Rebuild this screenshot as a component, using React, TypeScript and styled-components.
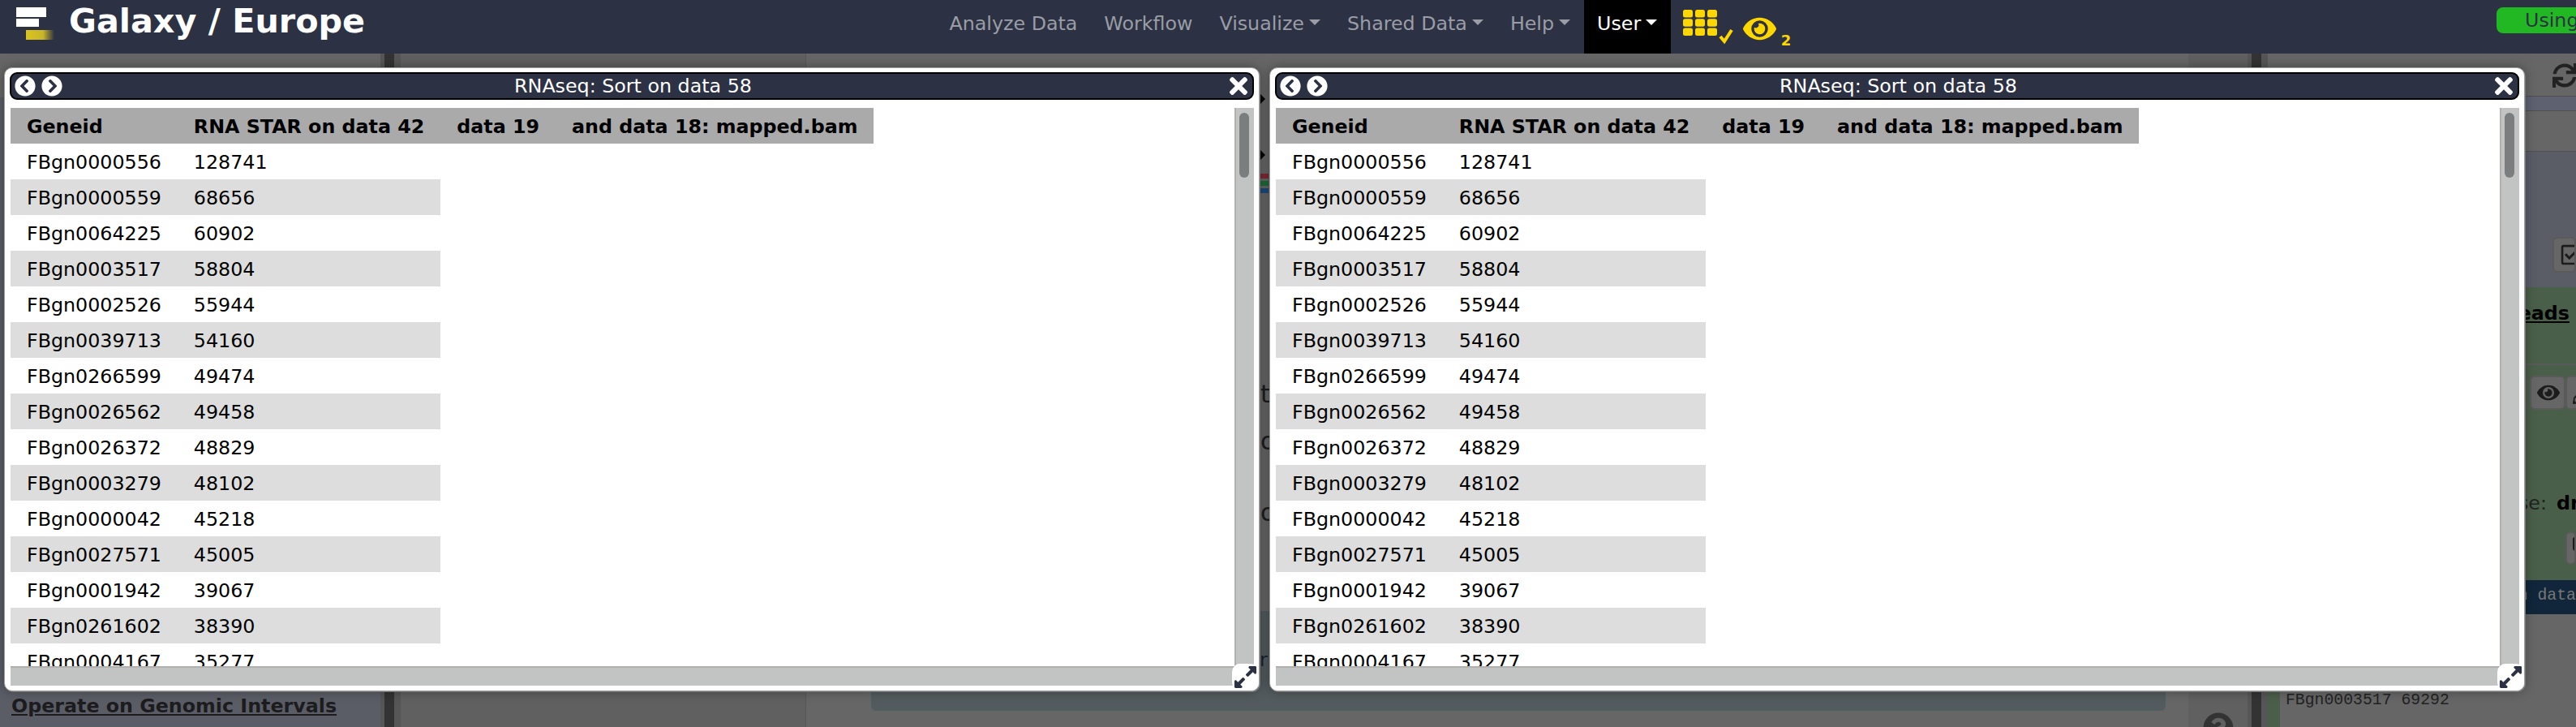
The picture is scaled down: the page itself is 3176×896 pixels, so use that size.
import React from "react";
import styled, { createGlobalStyle } from "styled-components";
import {
  FaChevronCircleLeft,
  FaChevronCircleRight,
  FaTimes,
  FaExpandAlt,
  FaEye,
  FaSync,
  FaRegCheckSquare,
  FaTag,
  FaPencilAlt,
  FaQuestionCircle,
} from "react-icons/fa";

const GlobalStyle = createGlobalStyle`
  html, body {
    margin: 0;
    padding: 0;
    background: #666;
    overflow: hidden;
  }
  * {
    box-sizing: border-box;
  }
`;

const SANS = `"DejaVu Sans", Verdana, sans-serif`;
const MONO = `"Liberation Mono", "Courier New", monospace`;

const Page = styled.div`
  position: relative;
  width: 3176px;
  height: 896px;
  overflow: hidden;
  display: flex;
  flex-direction: column;
  font-family: ${SANS};
  font-size: 23.75px;
  background: #666;
`;

/* masthead */

const Masthead = styled.header`
  flex: 0 0 66px;
  display: flex;
  align-items: stretch;
  background: #2c3143;
`;

const Brand = styled.div`
  flex: 0 0 1154px;
  display: flex;
  align-items: flex-start;
  padding-left: 20px;
`;

const BrandTitle = styled.span`
  margin: 0 0 0 15px;
  color: #fff;
  font-size: 41.3px;
  font-weight: 700;
  line-height: 52px;
`;

const NavItem = styled.div<{ $active?: boolean }>`
  display: flex;
  align-items: center;
  padding: 0 16.5px 8px;
  color: ${(p) => (p.$active ? "#fff" : "#9a9da6")};
  background: ${(p) => (p.$active ? "#000" : "transparent")};
  white-space: nowrap;
`;

const Caret = styled.span`
  display: inline-block;
  margin: 0 0 4px 6px;
  border-left: 7px solid transparent;
  border-right: 7px solid transparent;
  border-top: 7px solid currentColor;
`;

const NavIcons = styled.div`
  display: flex;
  align-items: flex-start;
  color: #ffd700;
  padding: 12px 0 0 15px;
`;

const EyeWrap = styled.div`
  position: relative;
  margin: 3px 0 0 9px;
  height: 30px;
`;

const EyeBadge = styled.span`
  position: absolute;
  left: 47px;
  top: 25px;
  font-size: 18px;
  font-weight: 700;
  line-height: 20px;
`;

const UsagePill = styled.div`
  margin: 9px 0 25px auto;
  width: 98px;
  padding-left: 35px;
  border-radius: 8px 0 0 8px;
  background: #22b823;
  color: #2c3143;
  line-height: 32px;
  overflow: hidden;
`;

/* dimmed page behind the windows */

const Workspace = styled.main`
  flex: 1;
  display: flex;
  min-height: 0;
`;

const ToolPanel = styled.aside`
  flex: 0 0 469px;
  display: flex;
  flex-direction: column;
  justify-content: flex-end;
  background: linear-gradient(#666 0 54px, #5a5d66 54px);
  padding: 0 0 12px 14px;
`;

const ToolLink = styled.a`
  color: #1c1c1e;
  font-weight: 700;
  text-decoration: underline;
  line-height: 28px;
`;

const Splitter = styled.div`
  flex: 0 0 25px;
  background: linear-gradient(
    to right,
    #565656 0 5px,
    #333 5px 17px,
    #565656 17px
  );
`;

const Center = styled.section`
  flex: 0 0 2277px;
  position: relative;
  display: flex;
  background: #606060;
`;

const CenterLeft = styled.div`
  flex: 0 0 500px;
  border-right: 1px solid #565656;
`;

const CenterMiddle = styled.div`
  flex: 0 0 1704px;
  display: flex;
  flex-direction: column;
  justify-content: flex-end;
  background: #666;
  padding: 0 28px 20px 80px;
`;

const Notice = styled.div`
  height: 123px;
  padding: 46px 0 0 478px;
  border: 1px solid #4a6065;
  border-top: 0;
  border-radius: 0 0 6px 6px;
  background: #535b5e;
  color: #14262e;
  line-height: 28px;
`;

const CenterRight = styled.div`
  flex: 1;
  padding: 812px 0 0 18px;
  font-size: 38px;
  color: #333;
  overflow: hidden;
  svg {
    display: block;
  }
`;

const GapMarks = styled.div`
  position: absolute;
  left: 1060px;
  top: 50px;
  width: 10px;
  display: flex;
  flex-direction: column;
`;

const MarkArrow = styled.span<{ $gap: number }>`
  margin-top: ${(p) => p.$gap}px;
  width: 0;
  height: 0;
  border-top: 6px solid transparent;
  border-bottom: 6px solid transparent;
  border-left: 6px solid #000;
`;

const MarkBar = styled.span<{ $color: string; $gap: number }>`
  margin-top: ${(p) => p.$gap}px;
  height: 6px;
  background: ${(p) => p.$color};
`;

const MarkGlyph = styled.span<{ $gap: number }>`
  margin-top: ${(p) => p.$gap}px;
  color: #1c1c1c;
  font-size: 30px;
  line-height: 28px;
`;

const HistoryPanel = styled.aside`
  flex: 1;
  display: flex;
  flex-direction: column;
  min-width: 0;
  background: #666;
`;

const HistoryTools = styled.div`
  flex: 0 0 53px;
  display: flex;
  justify-content: flex-end;
  padding-top: 12px;
  color: #222;
  font-size: 30px;
  border-bottom: 1px solid #4f4f4f;
  overflow: hidden;
`;

const RefreshSlot = styled.div`
  width: 29px;
  overflow: hidden;
  svg {
    display: block;
  }
`;

const HistoryBand = styled.div<{ $h: number; $bg: string }>`
  flex: 0 0 ${(p) => p.$h}px;
  background: ${(p) => p.$bg};
  border-bottom: 1px solid #4f4f4f;
`;

const HistoryActions = styled.div`
  flex: 0 0 167px;
  display: flex;
  justify-content: flex-end;
  padding-top: 105px;
  background: #5a5d66;
`;

const IconButton = styled.div<{ $w: number; $h: number }>`
  flex: 0 0 ${(p) => p.$w}px;
  height: ${(p) => p.$h}px;
  display: flex;
  align-items: center;
  padding-left: 7px;
  border: 2px solid #5a5a5a;
  border-radius: 6px;
  background: #666;
  color: #1c1c1c;
  font-size: 28px;
  overflow: hidden;
  svg {
    flex: none;
  }
`;

const Dataset = styled.div`
  flex: 0 0 361px;
  display: flex;
  flex-direction: column;
  background: #4a5f49;
`;

const DatasetTitle = styled.div`
  flex: 0 0 96px;
  display: flex;
  justify-content: flex-end;
  padding: 18px 8px 0 0;
  border-bottom: 2px solid #5a5a5a;
`;

const DatasetLink = styled.a`
  color: #000;
  font-weight: 700;
  text-decoration: underline;
  line-height: 28px;
  white-space: nowrap;
`;

const DatasetButtons = styled.div`
  display: flex;
  padding: 13px 0 0 323px;
`;

const DatasetMeta = styled.div`
  margin-top: 103px;
  display: flex;
  justify-content: flex-end;
  gap: 12px;
  color: #222;
  line-height: 24px;
  white-space: nowrap;
  strong {
    width: 24px;
    color: #000;
    overflow: hidden;
  }
`;

const DatasetTagRow = styled.div`
  display: flex;
  justify-content: flex-end;
  margin-top: 23px;
`;

const CodeBand = styled.div`
  flex: 0 0 42px;
  display: flex;
  justify-content: flex-end;
  background: #11263a;
  color: #777;
  font-family: ${MONO};
  font-size: 19.8px;
  line-height: 38px;
`;

const Preview = styled.div`
  flex: 1;
  padding: 94px 0 0 7px;
  border-left: 15px solid #4a5f49;
  color: #222;
  font-family: ${MONO};
  font-size: 19.8px;
  line-height: 24px;
`;

/* windows on top */

const WindowLayer = styled.div`
  position: absolute;
  left: 5px;
  top: 83px;
  display: flex;
  gap: 12px;
`;

const Window = styled.div`
  position: relative;
  width: 1548px;
  height: 769px;
  display: flex;
  flex-direction: column;
  padding: 5px 6px 6px 6px;
  background: #fff;
  border: 1px solid #a0a0a0;
  border-radius: 10px;
  box-shadow: 1px 1px 0 #777, 0 0 14px rgba(0, 0, 0, 0.35);
`;

const TitleBar = styled.div`
  flex: 0 0 34px;
  min-height: 0;
  display: grid;
  grid-template-columns: 1fr auto 1fr;
  grid-template-rows: 30px;
  align-items: center;
  padding: 0 1px 0 4px;
  background: #2c3143;
  border: 2px solid #000;
  border-radius: 9px;
  color: #fff;
`;

const TitleButtons = styled.div<{ $end?: boolean }>`
  height: 30px;
  display: flex;
  align-items: center;
  justify-content: ${(p) => (p.$end ? "flex-end" : "flex-start")};
  gap: 7px;
  font-size: ${(p) => (p.$end ? "32px" : "26px")};
  svg {
    display: block;
  }
`;

const Title = styled.span`
  padding-top: 1px;
  line-height: 29px;
  white-space: nowrap;
`;

const WindowBody = styled.div`
  flex: 1;
  min-height: 0;
  margin: 10px 0 0 1px;
  display: flex;
  flex-direction: column;
`;

const BodyRow = styled.div`
  flex: 1;
  min-height: 0;
  display: flex;
`;

const Viewport = styled.div`
  flex: 1;
  min-width: 0;
  overflow: hidden;
  background: #fff;
`;

const Table = styled.table`
  border-collapse: collapse;
  color: #000;
  white-space: nowrap;
`;

const Row = styled.tr<{ $shade?: boolean }>`
  height: 44px;
  background: ${(p) => (p.$shade ? "#ddd" : "transparent")};
`;

const HeadRow = styled.tr`
  height: 44px;
  background: #aaa;
`;

const HeadCell = styled.th`
  padding: 2px 20px 0;
  text-align: left;
  font-weight: 700;
`;

const Cell = styled.td`
  padding: 2px 20px 0;
`;

const VTrack = styled.div`
  flex: 0 0 24px;
  padding: 6px 4px 0 4px;
  background: #c2c4c3;
  border-left: 2px solid #b0b1ac;
`;

const VThumb = styled.div`
  width: 12px;
  height: 80px;
  border-radius: 6px;
  background: #7a7e7f;
`;

const HTrack = styled.div`
  flex: 0 0 24px;
  background: #c2c4c3;
  border-top: 2px solid #b0b1ac;
`;

const Resizer = styled.div`
  position: absolute;
  right: 0;
  bottom: 0;
  width: 33px;
  height: 33px;
  display: flex;
  align-items: center;
  justify-content: center;
  background: #fff;
  border-radius: 10px;
  color: #2c3143;
  font-size: 31px;
`;

const ROWS: [string, string][] = [
  ["FBgn0000556", "128741"],
  ["FBgn0000559", "68656"],
  ["FBgn0064225", "60902"],
  ["FBgn0003517", "58804"],
  ["FBgn0002526", "55944"],
  ["FBgn0039713", "54160"],
  ["FBgn0266599", "49474"],
  ["FBgn0026562", "49458"],
  ["FBgn0026372", "48829"],
  ["FBgn0003279", "48102"],
  ["FBgn0000042", "45218"],
  ["FBgn0027571", "45005"],
  ["FBgn0001942", "39067"],
  ["FBgn0261602", "38390"],
  ["FBgn0004167", "35277"],
];

const COLUMNS = ["Geneid", "RNA STAR on data 42", "data 19", "and data 18: mapped.bam"];

function Logo() {
  return (
    <svg width="50" height="50" viewBox="0 0 50 50">
      <defs>
        <linearGradient id="fade" x1="0" x2="1" y1="0" y2="0">
          <stop offset="0" stopColor="#d9c41c" />
          <stop offset="0.6" stopColor="#c9b62a" />
          <stop offset="1" stopColor="#2c3143" />
        </linearGradient>
      </defs>
      <rect x="0" y="9" width="37" height="12" fill="#fff" />
      <rect x="0" y="23" width="28" height="10" fill="#fff" />
      <rect x="12" y="37" width="35" height="12" fill="url(#fade)" />
    </svg>
  );
}

function AppsIcon() {
  const cells = [0, 1, 2].flatMap((r) => [0, 1, 2].map((c) => ({ r, c })));
  return (
    <svg width="65" height="42" viewBox="0 0 65 42">
      {cells.map(({ r, c }) => (
        <rect
          key={`${r}-${c}`}
          x={c * 15}
          y={r * 11.2}
          width="12"
          height="9.6"
          rx="2.5"
          fill="currentColor"
        />
      ))}
      <path d="M46 33l5 6 9-14" fill="none" stroke="currentColor" strokeWidth="4" />
    </svg>
  );
}

function SortWindow() {
  return (
    <Window>
      <TitleBar>
        <TitleButtons>
          <FaChevronCircleLeft />
          <FaChevronCircleRight />
        </TitleButtons>
        <Title>RNAseq: Sort on data 58</Title>
        <TitleButtons $end>
          <FaTimes />
        </TitleButtons>
      </TitleBar>
      <WindowBody>
        <BodyRow>
          <Viewport>
            <Table>
              <thead>
                <HeadRow>
                  {COLUMNS.map((c) => (
                    <HeadCell key={c}>{c}</HeadCell>
                  ))}
                </HeadRow>
              </thead>
              <tbody>
                {ROWS.map(([gene, count], i) => (
                  <Row key={gene} $shade={i % 2 === 1}>
                    <Cell>{gene}</Cell>
                    <Cell>{count}</Cell>
                  </Row>
                ))}
              </tbody>
            </Table>
          </Viewport>
          <VTrack>
            <VThumb />
          </VTrack>
        </BodyRow>
        <HTrack />
      </WindowBody>
      <Resizer>
        <FaExpandAlt />
      </Resizer>
    </Window>
  );
}

export default function App() {
  return (
    <Page>
      <GlobalStyle />
      <Masthead>
        <Brand>
          <Logo />
          <BrandTitle>Galaxy / Europe</BrandTitle>
        </Brand>
        <NavItem>Analyze Data</NavItem>
        <NavItem>Workflow</NavItem>
        <NavItem>
          Visualize
          <Caret />
        </NavItem>
        <NavItem>
          Shared Data
          <Caret />
        </NavItem>
        <NavItem>
          Help
          <Caret />
        </NavItem>
        <NavItem $active>
          User
          <Caret />
        </NavItem>
        <NavIcons>
          <AppsIcon />
          <EyeWrap>
            <FaEye size={41} />
            <EyeBadge>2</EyeBadge>
          </EyeWrap>
        </NavIcons>
        <UsagePill>Using</UsagePill>
      </Masthead>

      <Workspace>
        <ToolPanel>
          <ToolLink>Operate on Genomic Intervals</ToolLink>
        </ToolPanel>
        <Splitter />
        <Center>
          <CenterLeft />
          <CenterMiddle>
            <Notice>r</Notice>
          </CenterMiddle>
          <CenterRight>
            <FaQuestionCircle />
          </CenterRight>
          <GapMarks>
            <MarkArrow $gap={0} />
            <MarkArrow $gap={57} />
            <MarkBar $color="#7a2a33" $gap={17} />
            <MarkBar $color="#1d6b3a" $gap={3} />
            <MarkBar $color="#1c4a7a" $gap={3} />
            <MarkGlyph $gap={234}>t</MarkGlyph>
            <MarkGlyph $gap={30}>o</MarkGlyph>
            <MarkGlyph $gap={60}>o</MarkGlyph>
          </GapMarks>
        </Center>
        <Splitter />
        <HistoryPanel>
          <HistoryTools>
            <RefreshSlot>
              <FaSync />
            </RefreshSlot>
          </HistoryTools>
          <HistoryBand $h={18} $bg="#5d6170" />
          <HistoryBand $h={50} $bg="#666" />
          <HistoryActions>
            <IconButton $w={29} $h={44}>
              <FaRegCheckSquare />
            </IconButton>
          </HistoryActions>
          <Dataset>
            <DatasetTitle>
              <DatasetLink>RNA-seq reads</DatasetLink>
            </DatasetTitle>
            <DatasetButtons>
              <IconButton $w={44} $h={42}>
                <FaEye />
              </IconButton>
              <IconButton $w={30} $h={42}>
                <FaPencilAlt />
              </IconButton>
            </DatasetButtons>
            <DatasetMeta>
              database:
              <strong>dr</strong>
            </DatasetMeta>
            <DatasetTagRow>
              <IconButton $w={13} $h={41}>
                <FaTag />
              </IconButton>
            </DatasetTagRow>
          </Dataset>
          <CodeBand>on data</CodeBand>
          <Preview>FBgn0003517 69292</Preview>
        </HistoryPanel>
      </Workspace>

      <WindowLayer>
        <SortWindow />
        <SortWindow />
      </WindowLayer>
    </Page>
  );
}
